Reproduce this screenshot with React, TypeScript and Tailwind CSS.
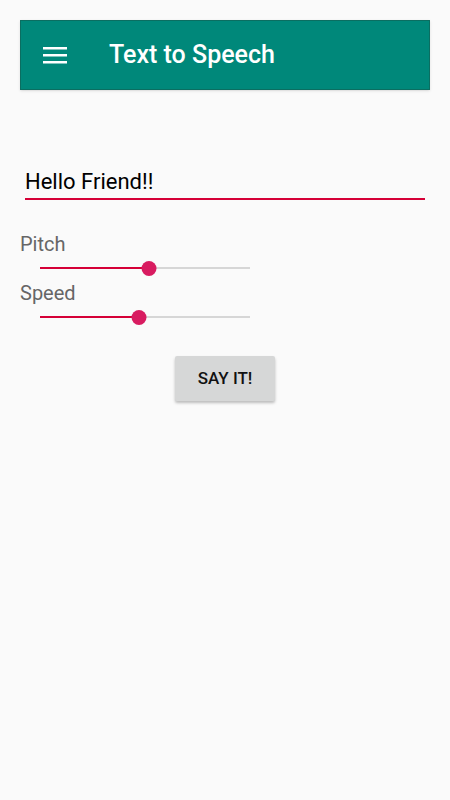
import React from "react";

function Slider({ pct }: { pct: number }) {
  return (
    <div className="relative ml-[20px] w-[210px] h-[16px] flex items-center">
      <div className="w-full h-[2px] bg-[#d6d6d6]" />
      <div className="absolute left-0 top-[7px] h-[2px] bg-[#d50037]" style={{ width: `${pct}%` }} />
      <div
        className="absolute top-[0.5px] w-[15px] h-[15px] rounded-full bg-[#d81b60] -translate-x-1/2"
        style={{ left: `${pct}%` }}
      />
    </div>
  );
}

export default function App() {
  return (
    <div className="min-h-[800px] w-[450px] bg-[#fafafa] pt-[20px] px-[20px]" style={{ fontFamily: "Roboto, 'Noto Sans', sans-serif" }}>
      <div className="h-[70px] bg-[#00887a] border border-[#0b6e61] flex items-center pl-[22px] shadow-sm">
        <svg width="24" height="17" viewBox="0 0 24 17" className="shrink-0">
          <rect x="0" y="0" width="24" height="2.5" fill="#fff" />
          <rect x="0" y="7" width="24" height="2.5" fill="#fff" />
          <rect x="0" y="14" width="24" height="2.5" fill="#fff" />
        </svg>
        <div className="ml-[42px] text-white text-[25px] leading-[28px] font-medium">Text to Speech</div>
      </div>

      <div className="mt-[79px] px-[5px]">
        <div className="text-[22px] leading-[25px] text-black">Hello Friend!!</div>
        <div className="mt-[4px] h-[2px] bg-[#d50037]" />
      </div>

      <div className="mt-[32px] text-[20px] leading-[24px] text-[#666666]">Pitch</div>
      <div className="mt-[4px]">
        <Slider pct={52} />
      </div>
      <div className="mt-[5px] text-[20px] leading-[24px] text-[#666666]">Speed</div>
      <div className="mt-[4px]">
        <Slider pct={47} />
      </div>

      <div className="mt-[31px] flex justify-center">
        <button className="w-[100px] h-[45px] bg-[#d6d7d7] rounded-[2px] shadow-[0_2px_3px_rgba(0,0,0,0.25)] text-[17px] font-medium text-[#111]">
          SAY IT!
        </button>
      </div>
    </div>
  );
}
